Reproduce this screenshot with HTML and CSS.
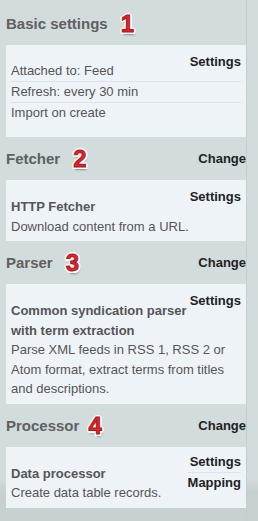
FILE: index.html
```html
<!DOCTYPE html>
<html lang="en">
<head>
    <meta charset="UTF-8">
    <meta name="viewport" content="width=device-width, initial-scale=1.0">
    <title>Importer settings</title>
    <link rel="stylesheet" href="styles.css">
</head>
<body>

<div class="sidebar">
    <section class="plugin">
        <div class="plugin-head">
            <h2>Basic settings <span class="step">1</span></h2>
        </div>
        <div class="card">
            <div class="card-actions">
                <a href="#">Settings</a>
            </div>
            <ul class="card-list">
                <li>Attached to: Feed</li>
                <li>Refresh: every 30 min</li>
                <li>Import on create</li>
            </ul>
        </div>
    </section>

    <section class="plugin">
        <div class="plugin-head">
            <h2>Fetcher <span class="step">2</span></h2>
            <a href="#" class="change">Change</a>
        </div>
        <div class="card">
            <div class="card-actions">
                <a href="#">Settings</a>
            </div>
            <div class="card-body">
                <h3>HTTP Fetcher</h3>
                <p>Download content from a URL.</p>
            </div>
        </div>
    </section>

    <section class="plugin">
        <div class="plugin-head">
            <h2>Parser <span class="step">3</span></h2>
            <a href="#" class="change">Change</a>
        </div>
        <div class="card">
            <div class="card-actions">
                <a href="#">Settings</a>
            </div>
            <div class="card-body">
                <h3>Common syndication parser with term extraction</h3>
                <p>Parse XML feeds in RSS 1, RSS 2 or Atom format, extract terms from titles and descriptions.</p>
            </div>
        </div>
    </section>

    <section class="plugin">
        <div class="plugin-head">
            <h2>Processor <span class="step step-4">4</span></h2>
            <a href="#" class="change">Change</a>
        </div>
        <div class="card">
            <div class="card-actions stacked">
                <a href="#">Settings</a>
                <a href="#">Mapping</a>
            </div>
            <div class="card-body">
                <h3>Data processor</h3>
                <p>Create data table records.</p>
            </div>
        </div>
    </section>
</div>

</body>
</html>
```

FILE: styles.css
```css
/* Basic reset */
* {
    margin: 0;
    padding: 0;
    box-sizing: border-box;
}

body {
    font-family: "Liberation Sans", Arial, Helvetica, sans-serif;
    font-size: 13px;
    color: #555;
    background: linear-gradient(to bottom, #d2dcdc 0, #d2dcdc 478px, #c7d0d0 492px);
    min-height: 521px;
}

a {
    color: #222;
    text-decoration: none;
    font-weight: bold;
}

.sidebar {
    width: 247px;
    min-height: 521px;
    padding: 2px 0 0 6px;
    border-right: 1px solid #c3cdcd;
}

/* Section headers */
.plugin-head {
    display: flex;
    justify-content: space-between;
    align-items: center;
    height: 22px;
    margin: 11px 0 10px;
}

.plugin-head h2 {
    font-size: 15px;
    color: #606060;
    line-height: 22px;
    display: flex;
    align-items: center;
}

.change {
    font-size: 13px;
    line-height: 22px;
}

/* Numbered markers */
.step {
    margin-left: 13px;
    font-size: 24px;
    font-weight: bold;
    line-height: 22px;
    color: #e5232b;
    -webkit-text-stroke: 0.9px #a3161b;
    text-shadow:
        2px 0 0 #fff, -2px 0 0 #fff, 0 2px 0 #fff, 0 -2px 0 #fff,
        1.5px 1.5px 0 #fff, -1.5px 1.5px 0 #fff, 1.5px -1.5px 0 #fff, -1.5px -1.5px 0 #fff,
        1px 3px 2px rgba(0, 0, 0, 0.35);
}

.step-4 {
    margin-left: 9px;
}

/* Cards */
.card {
    background-color: #eef3f8;
    padding: 9px 5px 5px;
}

.card-actions {
    float: right;
    margin-top: -2px;
}

.card-actions a {
    display: block;
    line-height: 20px;
    text-align: right;
}

.card-actions.stacked {
    margin-top: -4px;
}

.card-actions.stacked a + a {
    border-top: 1px solid #dde3e9;
}

.card-list {
    list-style: none;
    margin: 7px 0 9px;
}

.card-list li {
    line-height: 20px;
    border-bottom: 1px solid #dce2e7;
}

.card-list li:last-child {
    border-bottom: none;
}

.card-body {
    margin-top: 8px;
    line-height: 19.5px;
}

.card-body h3 {
    font-size: 13px;
    color: #555;
}
```
